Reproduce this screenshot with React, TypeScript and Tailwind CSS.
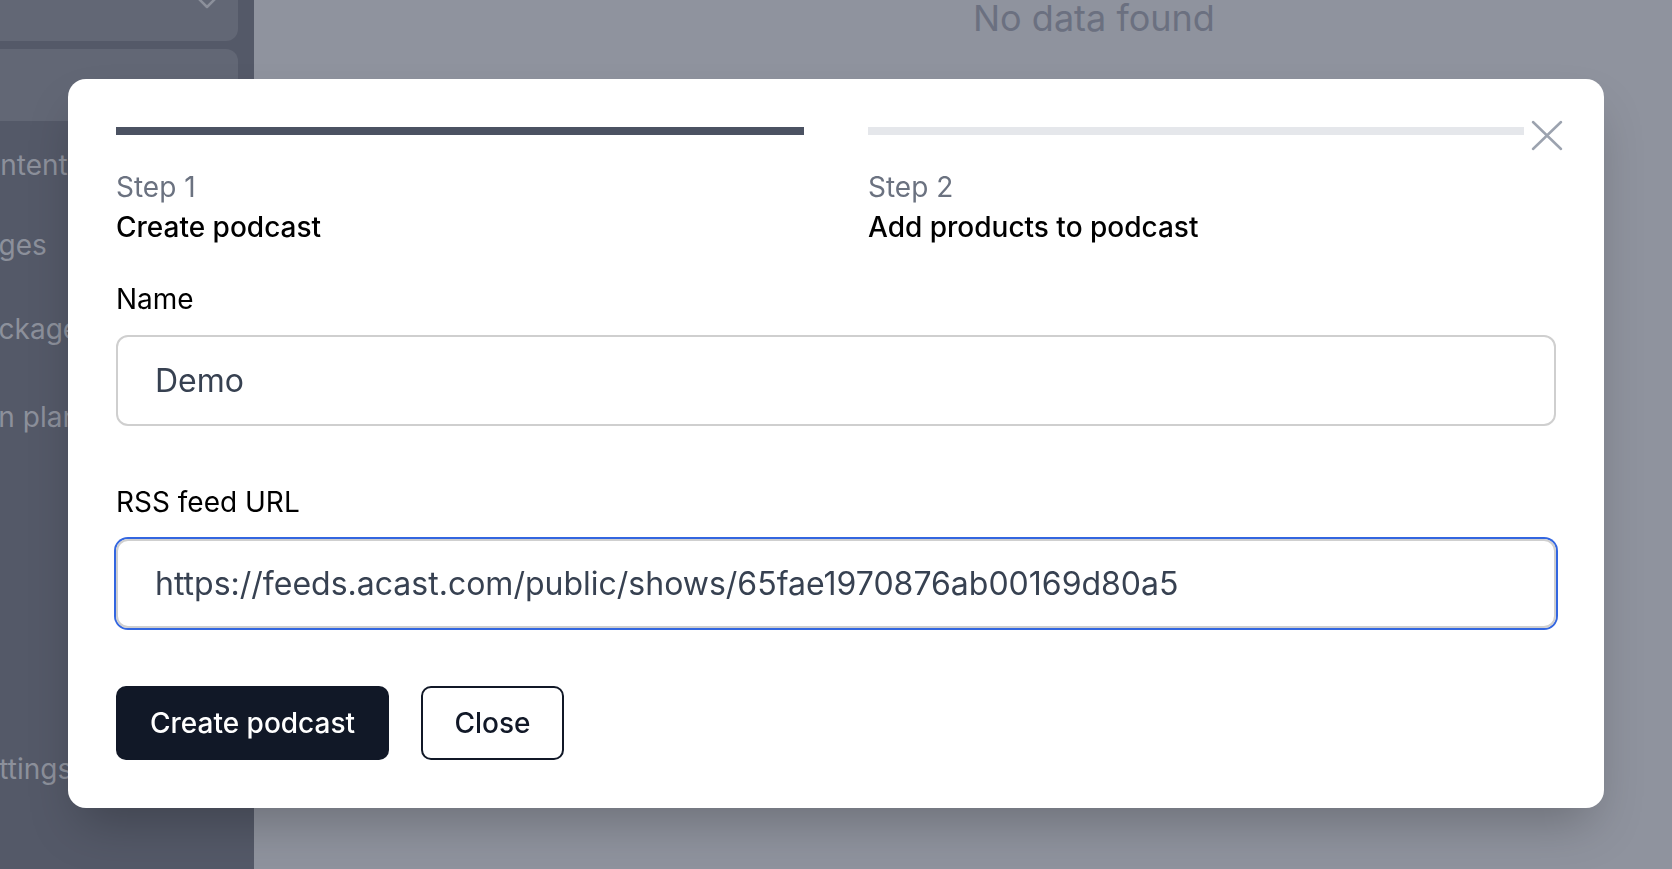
const navItems = [
  { label: 'Contents', offset: '-ml-[37px]', gap: 'mt-6' },
  { label: 'Pages', offset: '-ml-[35px]', gap: 'mt-[40px]' },
  { label: 'Packages', offset: '-ml-[35px]', gap: 'mt-[44px]' },
  { label: 'Own plan', offset: '-ml-[46px]', gap: 'mt-[48px]' },
]

export default function App() {
  return (
    <div className="relative flex h-[869px] w-full overflow-hidden font-['Inter',sans-serif]">
      {/* Sidebar (dimmed by overlay) */}
      <aside className="flex w-[254px] shrink-0 flex-col bg-[#545968] pr-4 pb-[80px]">
        <div className="flex h-[41px] justify-end rounded-br-[12px] bg-[#626775] pr-[18px]">
          <svg width="26" height="26" viewBox="0 0 26 26" className="-mt-[11px]" fill="none">
            <path d="M4 9l9 9 9-9" stroke="#8c909b" strokeWidth="2.5" strokeLinecap="round" strokeLinejoin="round" />
          </svg>
        </div>
        <div className="mt-2 h-[72px] rounded-r-[12px] bg-[#626775]" />
        <nav className="flex flex-col">
          {navItems.map((item) => (
            <span
              key={item.label}
              className={`${item.offset} ${item.gap} whitespace-nowrap text-[28px] leading-[40px] text-[#8c909b]`}
            >
              {item.label}
            </span>
          ))}
        </nav>
        <span className="-ml-[35px] mt-auto whitespace-nowrap text-[28px] leading-[40px] text-[#8c909b]">Settings</span>
      </aside>

      {/* Main area */}
      <main className="flex-1 bg-[#8f939e] pl-[719px]">
        <p className="whitespace-nowrap text-[36px] leading-[36px] text-[#6b7080]">No data found</p>
      </main>

      {/* Modal */}
      <div className="fixed inset-0 flex justify-center pt-[79px]">
        <div className="h-fit w-[1536px] rounded-[18px] bg-white p-12 shadow-2xl">
          <div className="grid grid-cols-2 gap-x-16">
            <div>
              <div className="h-2 bg-[#4b5262]" />
              <div className="mt-8 text-[28px] leading-[40px] text-[#6b7280]">Step 1</div>
              <div className="text-[28px] font-medium leading-[40px] text-black">Create podcast</div>
            </div>
            <div>
              <div className="flex items-center">
                <div className="h-2 flex-1 bg-[#e5e7eb]" />
                <svg width="40" height="40" viewBox="0 0 40 40" fill="none" className="-my-4 -mr-2 shrink-0">
                  <path d="M9 11l28 27M37 11L9 38" stroke="#9ca3af" strokeWidth="2.5" strokeLinecap="round" />
                </svg>
              </div>
              <div className="mt-8 text-[28px] leading-[40px] text-[#6b7280]">Step 2</div>
              <div className="text-[28px] font-medium leading-[40px] text-black">Add products to podcast</div>
            </div>
          </div>

          <label className="mt-8 block text-[28px] leading-[40px] text-black">Name</label>
          <input
            readOnly
            value="Demo"
            className="mt-4 block h-[91px] w-full rounded-[12px] border-2 border-[#cfcfcf] px-[37px] text-[32px] text-[#374151] outline-none"
          />

          <label className="mt-[56px] block text-[28px] leading-[40px] text-black">RSS feed URL</label>
          <input
            readOnly
            value="https://feeds.acast.com/public/shows/65fae1970876ab00169d80a5"
            className="mt-[17px] block h-[89px] w-full rounded-[12px] border-2 border-[#cfcfcf] px-[37px] text-[32px] text-[#374151] outline-none ring-2 ring-[#3366e0]"
          />

          <div className="mt-[58px] flex gap-8">
            <button className="h-[74px] w-[273px] rounded-[10px] bg-[#111827] text-[28px] font-medium text-white">
              Create podcast
            </button>
            <button className="h-[74px] w-[143px] rounded-[10px] border-2 border-[#111827] bg-white text-[28px] font-medium text-[#111827]">
              Close
            </button>
          </div>
        </div>
      </div>
    </div>
  )
}
